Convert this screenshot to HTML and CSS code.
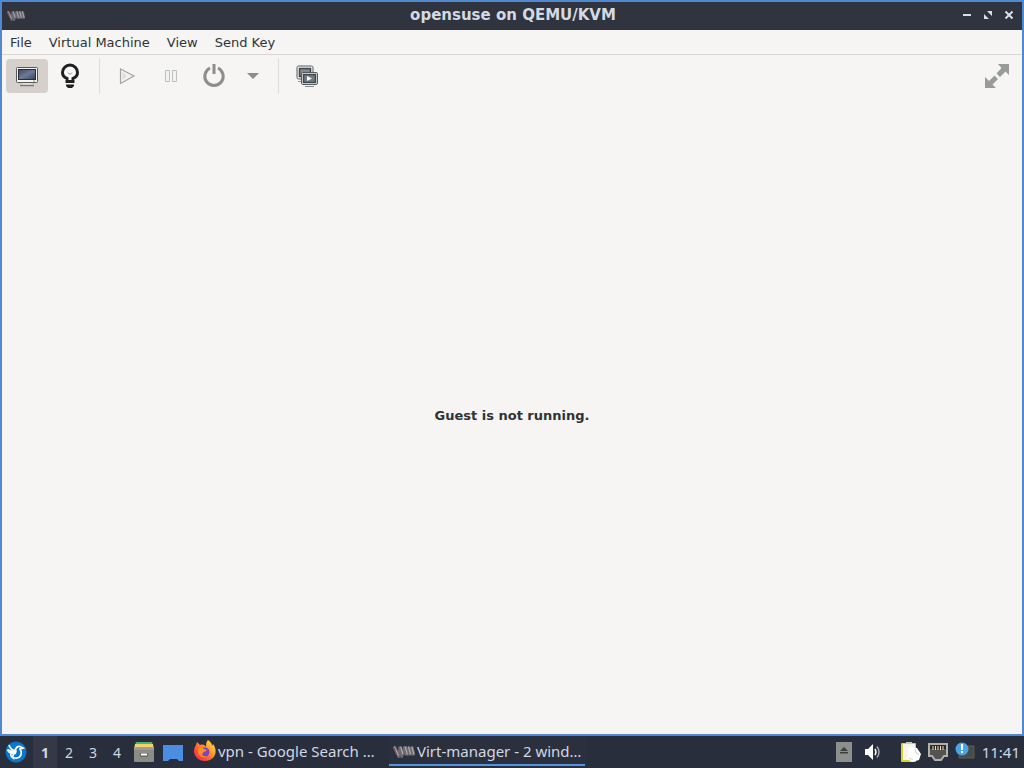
FILE: index.html
```html
<!DOCTYPE html>
<html lang="en">
<head>
<meta charset="utf-8">
<title>opensuse on QEMU/KVM</title>
<link rel="stylesheet" href="styles.css">
</head>
<body>
<svg class="defs" width="0" height="0" aria-hidden="true">
  <symbol id="vmm" viewBox="0 0 20 12">
    <path d="M1 2l4 8 2-8M6 2l2 8 3-8 1 8M11 2l3 8M14 2l2 8M17 2l2 8" fill="none" stroke="#6c6a70" stroke-width="3"/>
    <path d="M1 2l4 8M7 2l2 7M11 2l2 7M14 2l2 7M17 2l2 7" fill="none" stroke="#b3b1b3" stroke-width="1"/>
    <path d="M1 3l2 6" stroke="#7e4561" stroke-width="1"/>
  </symbol>
</svg>
<main class="window">
  <header class="titlebar">
    <svg class="title-icon" width="18" height="12" aria-hidden="true"><use href="#vmm"/></svg>
    <h1 class="title">opensuse on QEMU/KVM</h1>
    <div class="window-buttons">
      <button class="window-button" aria-label="Minimize"><svg width="10" height="10"><path d="M1 5h8" stroke="#d8dfe9" stroke-width="2"/></svg></button>
      <button class="window-button" aria-label="Maximize"><svg width="10" height="10"><path d="M4 1h5v5zM1 4v5h5z" fill="#d8dfe9"/></svg></button>
      <button class="window-button" aria-label="Close"><svg width="10" height="10"><path d="M1.500 1.500l7 7M8.500 1.500l-7 7" stroke="#d8dfe9" stroke-width="2"/></svg></button>
    </div>
  </header>
  <nav class="menubar" aria-label="Menu">
    <button class="menu">File</button>
    <button class="menu">Virtual Machine</button>
    <button class="menu">View</button>
    <button class="menu">Send Key</button>
  </nav>
  <div class="toolbar" role="toolbar" aria-label="Machine controls">
    <button class="tool tool-active" aria-label="Show the graphical console" aria-pressed="true">
      <svg width="24" height="24" viewBox="0 0 24 24">
        <defs><linearGradient id="screen" x2="1" y2="1"><stop offset="0" stop-color="#3d4961"/><stop offset=".5" stop-color="#6d7a96"/><stop offset="1" stop-color="#34415b"/></linearGradient></defs>
        <rect x="1.500" y="3.500" width="21" height="15" rx="1" fill="#f4f4f1" stroke="#555853"/>
        <rect x="3.500" y="5.500" width="17" height="10" fill="url(#screen)" stroke="#252d3c"/>
        <path d="M18 17h2" stroke="#82a263"/>
        <path d="M8 19h8l1 2H7z" fill="#e7e7e2"/><path d="M5 21.500h14" stroke="#777a75" stroke-width="1.500"/>
      </svg>
    </button>
    <button class="tool" aria-label="Show virtual hardware details">
      <svg width="24" height="26" viewBox="0 0 24 26">
        <path d="M9 18.500v-3C6.500 14.500 4.500 12.500 4.500 9.500a7.500 7.500 0 0115 0c0 3-2 5-4.500 6v3z" fill="#fafafa" stroke="#1e2021" stroke-width="3"/>
        <path d="M10 9.500l2 2 2-2" fill="none" stroke="#888"/>
        <path d="M8 21.500h8v1.500l-2 2h-4l-2-2z" fill="#1e2021"/>
      </svg>
    </button>
    <span class="divider"></span>
    <button class="tool" aria-label="Power on the virtual machine"><svg width="24" height="24"><path d="M4.500 5v14.500L18 12z" fill="#f1f1f0" stroke="#a4a5a2" stroke-width="1.200"/><path d="M6.500 8v8l4-4z" fill="#deded9"/></svg></button>
    <button class="tool" aria-label="Pause the virtual machine"><svg width="24" height="24"><path d="M6.500 6.500h4v11h-4zM13.500 6.500h4v11h-4z" fill="#f1f3f1" stroke="#bec0bc"/></svg></button>
    <button class="tool" aria-label="Shut down the virtual machine"><svg width="24" height="24"><path d="M8 4a9.200 9.200 0 108 0" fill="none" stroke="#8d8d8b" stroke-width="3"/><path d="M12 0v10" stroke="#8d8d8b" stroke-width="3"/></svg></button>
    <button class="tool tool-narrow" aria-label="Shutdown options"><svg width="12" height="8"><path d="M0 1h12L6 7z" fill="#8d8d8a"/></svg></button>
    <span class="divider"></span>
    <button class="tool" aria-label="Manage VM snapshots">
      <svg width="24" height="24" viewBox="0 0 24 24">
        <rect x="2" y="2" width="16" height="13" rx="1.500" fill="#f4f4f2" stroke="#555a5e"/><rect x="4.500" y="4.500" width="11" height="8" fill="#818890" stroke="#3f454d" stroke-width="1.500"/><path d="M3 17.500h4" stroke="#999"/>
        <rect x="6.500" y="8.500" width="16" height="12" rx="1.500" fill="#f4f4f2" stroke="#555a5e"/><rect x="8.500" y="10.500" width="12" height="8" fill="#747b85" stroke="#3f454d" stroke-width="1.500"/>
        <path d="M12 12l5 2.500-5 2.500z" fill="#fff"/><path d="M10 22.500h9" stroke="#85898c"/>
      </svg>
    </button>
    <button class="tool tool-end" aria-label="Switch to fullscreen view"><svg width="26" height="26"><path d="M14 1h11v11l-3.500-3.500-5.500 5.500-3.500-3.500 5-5.500zM1 14v11h11l-3.500-3.500 5.500-5.500-3.500-3.500-5.500 5.500z" fill="#999b98"/><path d="M9 9l8 8" stroke="#f6f5f4" stroke-width="2"/></svg></button>
  </div>
  <section class="viewer"><p class="status">Guest is not running.</p></section>
</main>
<footer class="taskbar">
  <button class="launcher" aria-label="Application menu">
    <svg width="22" height="22" viewBox="0 0 22 22"><circle cx="11" cy="11" r="10.500" fill="#0877cf"/><path d="M2.500 8.500c1 3 4 4 7 3.500M4 4c1 3 3 5 6 6M10 11c0-4 3-7 6-5l2 1-3 1c3 5 0 10-5 9-3 0-5-2-4-5" fill="none" stroke="#fff" stroke-width="1.700"/><path d="M3 8l6 2 3-1-1 4c-4 1-7-1-8-5zM10 13c-2 2-2 4 0 6-3-1-4-4-2-6z" fill="#fff"/></svg>
  </button>
  <nav class="desktops" aria-label="Desktops">
    <button class="desktop desktop-current">1</button>
    <button class="desktop">2</button>
    <button class="desktop">3</button>
    <button class="desktop">4</button>
  </nav>
  <div class="quick">
    <button class="quick-button" aria-label="File manager"><svg width="22" height="22"><path d="M3 1h16l1 4H2z" fill="#42b582"/><path d="M2 3h18l1 5H1z" fill="#f4d366"/><path d="M2 6h18l1 3H1z" fill="#e98c3b"/><rect x="1" y="7" width="20" height="14" rx="1" fill="#8b8c88"/><path d="M1 8h20" stroke="#a9aaa5"/><rect x="7" y="12" width="8" height="4" rx="1" fill="#676965"/><path d="M8 13.500h6" stroke="#fff" stroke-width="2"/></svg></button>
    <button class="quick-button" aria-label="Show desktop"><svg width="22" height="22"><path d="M1 4h20v16h-4l-2-2H8l-2 2H1z" fill="#4b8de0"/></svg></button>
  </div>
  <button class="task">
    <svg width="22" height="22" viewBox="0 0 22 22" aria-hidden="true">
      <defs><linearGradient id="fox" x1="1" x2="0" y2="1"><stop offset="0" stop-color="#fff04a"/><stop offset=".4" stop-color="#ff982c"/><stop offset=".7" stop-color="#ff4b39"/><stop offset="1" stop-color="#e12870"/></linearGradient></defs>
      <path d="M14 0c3 2 4 4 4 6l1-2c6 8 1 17-8 17C2 21-3 12 2 5l1-3 3 3c3-1 5 0 6 2 0-3 0-5 2-7z" fill="url(#fox)"/><circle cx="11" cy="12" r="4.500" fill="#7546c9"/><path d="M4 8c2-2 4-1 6 1l3 1c-1 2-3 1-4 3-2 2 1 4 4 3-4 3-9 0-9-4z" fill="#ff8a27"/>
    </svg>
    <span class="task-label">vpn - Google Search …</span>
  </button>
  <button class="task task-active">
    <svg width="22" height="14" aria-hidden="true"><use href="#vmm"/></svg>
    <span class="task-label">Virt-manager - 2 wind…</span>
  </button>
  <div class="tray">
    <button class="tray-button" aria-label="Removable devices"><svg width="16" height="20"><path d="M0 0h16v20H0z" fill="#8c8f8e"/><path d="M8 5l4 4H4zM4 10h8v1.500H4z" fill="#3c4038"/></svg></button>
    <button class="tray-button tray-volume" aria-label="Volume"><svg width="18" height="18"><path d="M1 6h3l5-5v16l-5-5H1z" fill="#fff"/><path d="M11 6q2 3 0 6" fill="none" stroke="#fff" stroke-width="1.500"/><path d="M13 3.500q4 5.500 0 11" fill="none" stroke="#a4a6ad" stroke-width="1.500"/></svg></button>
    <button class="tray-button" aria-label="Clipboard"><svg width="20" height="22"><rect x="0" y="2" width="15" height="19" rx="1" fill="#d5d431"/><path d="M2 3h12v16H2z" fill="#f5f5ed"/><path d="M5 3V1h6v2z" fill="#c9c9c2"/><path d="M9 6l7 1 4 6-2 6-7 2-6-4 2-2V8z" fill="#fff"/><path d="M14 8l1 4 3 1M8 17l4 2" stroke="#cfd1ca" fill="none"/></svg></button>
    <button class="tray-button" aria-label="Wired network"><svg width="20" height="18"><path d="M1 1h18v12h-3l-3 4H7l-3-4H1z" fill="#55534f" stroke="#b0b0ae" stroke-width="2"/><path d="M2 2h16v4H2z" fill="#292a2a"/><path d="M5 3v4M7.500 3v4M10 3v4M12.500 3v4M15 3v4" stroke="#f2d9b8"/></svg></button>
    <button class="tray-button" aria-label="Updates available"><svg width="20" height="20"><path d="M9 4h10v12H4v-3z" fill="#484b4b" stroke="#605b4c"/><circle cx="7" cy="7" r="6.500" fill="#48a5e8"/><path d="M7 2v6M7 9v2" stroke="#fff" stroke-width="2"/></svg></button>
    <time class="clock">11:41</time>
  </div>
</footer>
</body>
</html>
```
FILE: styles.css
```css
* { box-sizing: border-box; }

body {
  margin: 0;
  min-height: 100vh;
  display: flex;
  flex-direction: column;
  background: #292e3d;
  color: #2e3436;
  font-family: "DejaVu Sans", sans-serif;
  font-size: 13px;
}

button {
  display: flex;
  align-items: center;
  justify-content: center;
  padding: 0;
  border: 0;
  background: none;
  color: inherit;
  font: inherit;
}

svg { display: block; flex: none; }
.defs { position: absolute; }

.window {
  flex: 1;
  display: flex;
  flex-direction: column;
  border: 2px solid #5089d3;
  background: #f6f5f4;
}

.titlebar {
  display: grid;
  grid-template-columns: 1fr auto 1fr;
  align-items: center;
  height: 28px;
  padding: 0 3px 2px 5px;
  background: #2f343f;
  color: #d3dae3;
}

.title {
  margin: 0;
  font-size: 15px;
  line-height: 20px;
}

.window-buttons { display: flex; justify-content: flex-end; gap: 1px; }
.window-button { width: 20px; height: 20px; }

.menubar {
  display: flex;
  gap: 1px;
  height: 25px;
  border-bottom: 1px solid #dad8d6;
}

.menu { padding: 0 8px; }

.toolbar {
  display: flex;
  align-items: center;
  height: 42px;
  padding: 0 4px;
}

.tool { width: 42px; height: 34px; margin-right: 1px; border-radius: 4px; }
.tool-active { background: #d5d0cc; }
.tool-narrow { width: 34px; }
.tool-end { margin-left: auto; margin-right: 0; }
.divider { width: 1px; height: 36px; margin: 0 7px; background: #dedddb; }

.viewer {
  flex: 1;
  display: flex;
  align-items: center;
  justify-content: center;
}

.status { margin: 0; font-weight: bold; }

.taskbar {
  display: flex;
  height: 32px;
  padding: 0 5px;
  color: #d3d7e1;
  font-family: "Noto Sans", sans-serif;
  font-size: 15px;
}

.launcher { width: 22px; }
.desktops { display: flex; padding-left: 6px; }
.desktop { width: 24px; font-size: 14px; }
.desktop-current { background: #343847; font-weight: bold; }
.quick { display: flex; gap: 7px; padding: 0 9px 0 4px; }

.task {
  width: 196px;
  justify-content: flex-start;
  gap: 2px;
  padding-top: 2px;
  border-bottom: 2px solid transparent;
  margin-bottom: 2px;
}

.task svg { margin-left: 1px; }
.task-active svg { margin-left: 4px; }
.task-active { border-color: #5294e2; background: #2b303f; }
.task-label { white-space: nowrap; }
.tray { display: flex; align-items: center; gap: 7px; margin-left: auto; }
.tray-volume { margin: 0 12px 0 5px; }
.clock { margin-right: -1px; }
```
